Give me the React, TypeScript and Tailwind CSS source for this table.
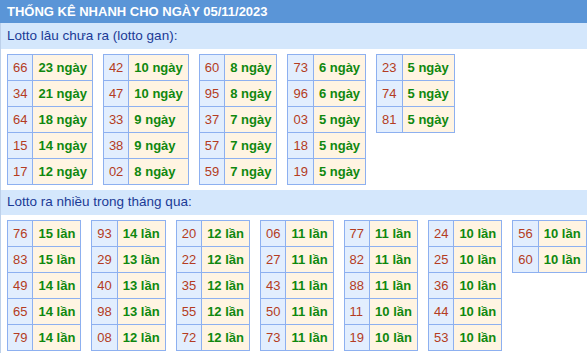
const gan: [string, string][][] = [
  [['66', '23 ngày'], ['34', '21 ngày'], ['64', '18 ngày'], ['15', '14 ngày'], ['17', '12 ngày']],
  [['42', '10 ngày'], ['47', '10 ngày'], ['33', '9 ngày'], ['38', '9 ngày'], ['02', '8 ngày']],
  [['60', '8 ngày'], ['95', '8 ngày'], ['37', '7 ngày'], ['57', '7 ngày'], ['59', '7 ngày']],
  [['73', '6 ngày'], ['96', '6 ngày'], ['03', '5 ngày'], ['18', '5 ngày'], ['19', '5 ngày']],
  [['23', '5 ngày'], ['74', '5 ngày'], ['81', '5 ngày']],
]

const nhieu: [string, string][][] = [
  [['76', '15 lần'], ['83', '15 lần'], ['49', '14 lần'], ['65', '14 lần'], ['79', '14 lần']],
  [['93', '14 lần'], ['29', '13 lần'], ['40', '13 lần'], ['98', '13 lần'], ['08', '12 lần']],
  [['20', '12 lần'], ['22', '12 lần'], ['35', '12 lần'], ['55', '12 lần'], ['72', '12 lần']],
  [['06', '11 lần'], ['27', '11 lần'], ['43', '11 lần'], ['50', '11 lần'], ['73', '11 lần']],
  [['77', '11 lần'], ['82', '11 lần'], ['88', '11 lần'], ['11', '10 lần'], ['19', '10 lần']],
  [['24', '10 lần'], ['25', '10 lần'], ['36', '10 lần'], ['44', '10 lần'], ['53', '10 lần']],
  [['56', '10 lần'], ['60', '10 lần']],
]

function LottoTable({ rows }: { rows: [string, string][] }) {
  return (
    <table className="border-collapse self-start">
      <tbody>
        {rows.map(([num, val]) => (
          <tr key={num}>
            <td className="border border-[#8db0f0] bg-[#e2eefe] px-[5px] py-[5px] text-[13px] leading-[15px] text-[#b43c22]">
              {num}
            </td>
            <td className="border border-[#8db0f0] bg-[#fff4e2] px-[5px] py-[5px] text-[13px] leading-[15px] font-bold text-[#0f880f] whitespace-nowrap">
              {val}
            </td>
          </tr>
        ))}
      </tbody>
    </table>
  )
}

function Section({ title, tables, bandHeight }: { title: string; tables: [string, string][][]; bandHeight: string }) {
  return (
    <div>
      <div className={`flex items-center bg-[#d4e7fc] pl-[6px] text-[13.5px] text-[#1a3a96] ${bandHeight}`}>
        {title}
      </div>
      <div className="flex flex-wrap gap-x-[10px] pl-[6px] pt-[5px] pb-[5px]">
        {tables.map((t, i) => (
          <LottoTable key={i} rows={t} />
        ))}
      </div>
    </div>
  )
}

export default function App() {
  return (
    <div className="w-[587px] h-[353px] overflow-hidden bg-white" style={{ fontFamily: '"Liberation Sans", Arial, sans-serif' }}>
      <div className="flex h-[23px] items-center bg-[#5a95d7] pl-[7px] text-[13px] font-bold text-white">
        THỐNG KÊ NHANH CHO NGÀY 05/11/2023
      </div>
      <div className="border-l border-[#bcd0ea]">
        <Section title="Lotto lâu chưa ra (lotto gan):" tables={gan} bandHeight="h-[26px]" />
        <Section title="Lotto ra nhiều trong tháng qua:" tables={nhieu} bandHeight="h-[25px]" />
      </div>
    </div>
  )
}
